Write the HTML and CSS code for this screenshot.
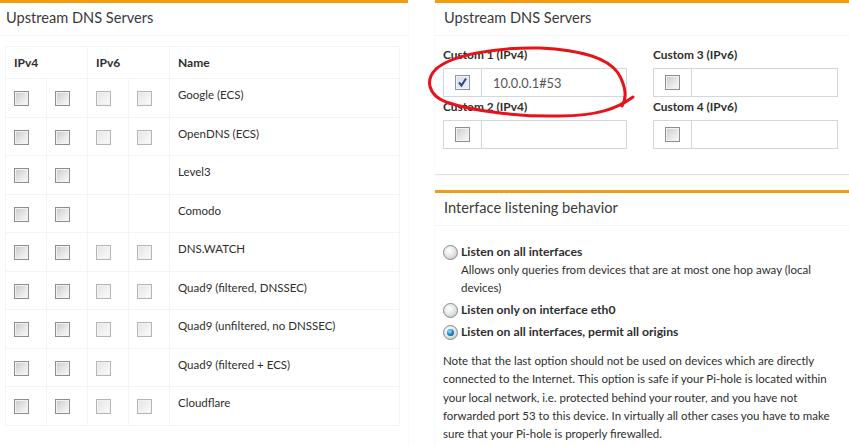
FILE: index.html
```html
<!DOCTYPE html>
<html>
<head>
  <meta charset="utf-8">
  <title>Settings - DNS</title>
  <link rel="stylesheet" href="styles.css">
</head>
<body>
  <div class="row">
    <div class="col-left">
      <div class="box">
        <div class="box-header"><h3>Upstream DNS Servers</h3></div>
        <div class="box-body servers-body">
          <table class="servers">
            <tr class="head">
              <th colspan="2">IPv4</th>
              <th colspan="2">IPv6</th>
              <th>Name</th>
            </tr>
            <tr>
              <td class="c"><span class="cb"></span></td><td class="c"><span class="cb"></span></td>
              <td class="c"><span class="cb off"></span></td><td class="c"><span class="cb off"></span></td>
              <td>Google (ECS)</td>
            </tr>
            <tr>
              <td class="c"><span class="cb"></span></td><td class="c"><span class="cb"></span></td>
              <td class="c"><span class="cb off"></span></td><td class="c"><span class="cb off"></span></td>
              <td>OpenDNS (ECS)</td>
            </tr>
            <tr>
              <td class="c"><span class="cb"></span></td><td class="c"><span class="cb"></span></td>
              <td class="c"></td><td class="c"></td>
              <td>Level3</td>
            </tr>
            <tr>
              <td class="c"><span class="cb"></span></td><td class="c"><span class="cb"></span></td>
              <td class="c"></td><td class="c"></td>
              <td>Comodo</td>
            </tr>
            <tr>
              <td class="c"><span class="cb"></span></td><td class="c"><span class="cb"></span></td>
              <td class="c"><span class="cb off"></span></td><td class="c"><span class="cb off"></span></td>
              <td>DNS.WATCH</td>
            </tr>
            <tr>
              <td class="c"><span class="cb"></span></td><td class="c"><span class="cb"></span></td>
              <td class="c"><span class="cb off"></span></td><td class="c"><span class="cb off"></span></td>
              <td>Quad9 (filtered, DNSSEC)</td>
            </tr>
            <tr>
              <td class="c"><span class="cb"></span></td><td class="c"><span class="cb"></span></td>
              <td class="c"><span class="cb off"></span></td><td class="c"><span class="cb off"></span></td>
              <td>Quad9 (unfiltered, no DNSSEC)</td>
            </tr>
            <tr>
              <td class="c"><span class="cb"></span></td><td class="c"><span class="cb"></span></td>
              <td class="c"><span class="cb off"></span></td><td class="c"></td>
              <td>Quad9 (filtered + ECS)</td>
            </tr>
            <tr>
              <td class="c"><span class="cb"></span></td><td class="c"><span class="cb"></span></td>
              <td class="c"><span class="cb off"></span></td><td class="c"><span class="cb off"></span></td>
              <td>Cloudflare</td>
            </tr>
          </table>
        </div>
      </div>
    </div>

    <div class="col-right">
      <div class="box custom-box">
        <div class="box-header"><h3>Upstream DNS Servers</h3></div>
        <div class="box-body">
          <div class="custom-grid">
            <div>
              <label>Custom 1 (IPv4)</label>
              <div class="input-group">
                <span class="addon"><span class="cb on"><svg width="13" height="13" viewBox="0 0 13 13"><path d="M3 6.5 L5.5 9.5 L10 2.5" fill="none" stroke="#2f4585" stroke-width="2"/></svg></span></span>
                <input type="text" value="10.0.0.1#53">
              </div>
            </div>
            <div>
              <label>Custom 3 (IPv6)</label>
              <div class="input-group">
                <span class="addon"><span class="cb"></span></span>
                <input type="text" value="">
              </div>
            </div>
            <div>
              <label>Custom 2 (IPv4)</label>
              <div class="input-group">
                <span class="addon"><span class="cb"></span></span>
                <input type="text" value="">
              </div>
            </div>
            <div>
              <label>Custom 4 (IPv6)</label>
              <div class="input-group">
                <span class="addon"><span class="cb"></span></span>
                <input type="text" value="">
              </div>
            </div>
          </div>
        </div>
      </div>

      <div class="box">
        <div class="box-header"><h3>Interface listening behavior</h3></div>
        <div class="box-body listen">
          <div class="radio-item">
            <span class="radio"></span>
            <div>
              <strong>Listen on all interfaces</strong>
              <div>Allows only queries from devices that are at most one hop away (local devices)</div>
            </div>
          </div>
          <div class="radio-item">
            <span class="radio"></span>
            <div><strong>Listen only on interface eth0</strong></div>
          </div>
          <div class="radio-item">
            <span class="radio checked"></span>
            <div><strong>Listen on all interfaces, permit all origins</strong></div>
          </div>
          <p class="note">Note that the last option should not be used on devices which are directly connected to the Internet. This option is safe if your Pi-hole is located within your local network, i.e. protected behind your router, and you have not forwarded port 53 to this device. In virtually all other cases you have to make sure that your Pi-hole is properly firewalled.</p>
        </div>
      </div>
    </div>
  </div>

  <svg class="scribble" width="849" height="446" viewBox="0 0 849 446">
    <path d="M633 97 C 618 108, 598 116, 560 116 C 520 117, 472 111, 446 102 C 428 95, 425 80, 436 69 C 452 55, 495 47, 540 48 C 580 50, 608 58, 618 73 C 626 86, 627 98, 622 106" fill="none" stroke="#e8121a" stroke-width="3" stroke-linecap="round"/>
  </svg>
</body>
</html>
```

FILE: styles.css
```css
body {
  margin: 0;
  background: #fff;
  color: #2e2e2e;
  font-family: Lato, "Open Sans", sans-serif;
  font-size: 11.5px;
  line-height: 18px;
}

.row {
  display: flex;
  align-items: flex-start;
}

.col-left {
  width: 408px;
}

.col-right {
  width: 414px;
  margin-left: 27px;
}

.box {
  background: #fff;
  border-top: 3px solid #f39c12;
  box-shadow: 0 1px 1px rgba(0, 0, 0, 0.12);
  margin-bottom: 16px;
}

.box-header {
  padding: 5px 6px 7px 6px;
  border-bottom: 1px solid #f4f4f4;
}

.col-right .box-header {
  padding-left: 9px;
}

.box-header h3 {
  margin: 0;
  font-size: 14.6px;
  font-weight: normal;
  line-height: 20px;
  color: #3a3a3a;
}

.box-body {
  padding: 10px 8px 14px 5px;
}

.servers-body {
  padding-bottom: 40px;
}

/* server table */
.servers {
  width: 100%;
  border-collapse: collapse;
  border: 1px solid #f4f4f4;
}

.servers th,
.servers td {
  border: 1px solid #f4f4f4;
  padding: 7px 8px 0 8px;
  vertical-align: top;
  text-align: left;
}

.servers tr {
  height: 38.5px;
}

.servers tr.head {
  height: 32px;
}

.servers th {
  font-weight: bold;
  font-size: 12px;
}

.servers td.c {
  width: 24px;
}

.servers .cb {
  margin-top: 5px;
}

.cb {
  display: block;
  width: 13px;
  height: 13px;
  border: 1px solid #8e8e8e;
  background: linear-gradient(135deg, #c9c9c9 0%, #e6e6e6 55%, #fafafa 100%);
  box-shadow: inset 0 0 0 1px #f2f2f2;
}

.cb.off {
  border-color: #b5b5b5;
  background: linear-gradient(135deg, #e3e3e3 0%, #f1f1f1 55%, #fcfcfc 100%);
}

.cb.on {
  background: linear-gradient(135deg, #d8dce6 0%, #eef0f5 100%);
  border-color: #8b94ab;
}

.cb svg {
  display: block;
}

/* custom servers */
.custom-box .box-body {
  padding: 11px 11px 23px 8px;
}

.custom-grid {
  display: grid;
  grid-template-columns: 184px 185px;
  column-gap: 26px;
}

.custom-grid label {
  display: block;
  font-weight: bold;
  font-size: 11.9px;
  line-height: 16px;
  margin-bottom: 5px;
}

.input-group {
  display: flex;
  height: 29px;
  margin-bottom: 2px;
}

.addon {
  width: 37px;
  border: 1px solid #d2d6de;
  display: flex;
  align-items: center;
  justify-content: center;
}

.input-group input {
  flex: 1;
  min-width: 0;
  border: 1px solid #d2d6de;
  border-left: none;
  padding: 0 11px;
  font-family: inherit;
  font-size: 12.8px;
  color: #555;
  outline: none;
}

/* listening behaviour */
.listen {
  padding: 17px 11px 10px 8px;
}

.radio-item {
  display: flex;
  gap: 3px;
  margin-bottom: 4px;
}

.radio-item strong {
  display: block;
  font-size: 12.2px;
}

.radio {
  flex: none;
  width: 13px;
  height: 13px;
  margin-top: 2px;
  border: 1px solid #888;
  border-radius: 50%;
  background: radial-gradient(circle at 40% 35%, #fff 0%, #e8e8e8 45%, #bdbdbd 100%);
  position: relative;
}

.radio.checked::after {
  content: "";
  position: absolute;
  left: 3px;
  top: 3px;
  width: 7px;
  height: 7px;
  border-radius: 50%;
  background: radial-gradient(circle at 40% 35%, #9fe3ff 0%, #1b87c9 50%, #063f6e 100%);
}

.note {
  margin: 11px 0 0 0;
  line-height: 18.3px;
}

.scribble {
  position: absolute;
  left: 0;
  top: 0;
  pointer-events: none;
}
```
